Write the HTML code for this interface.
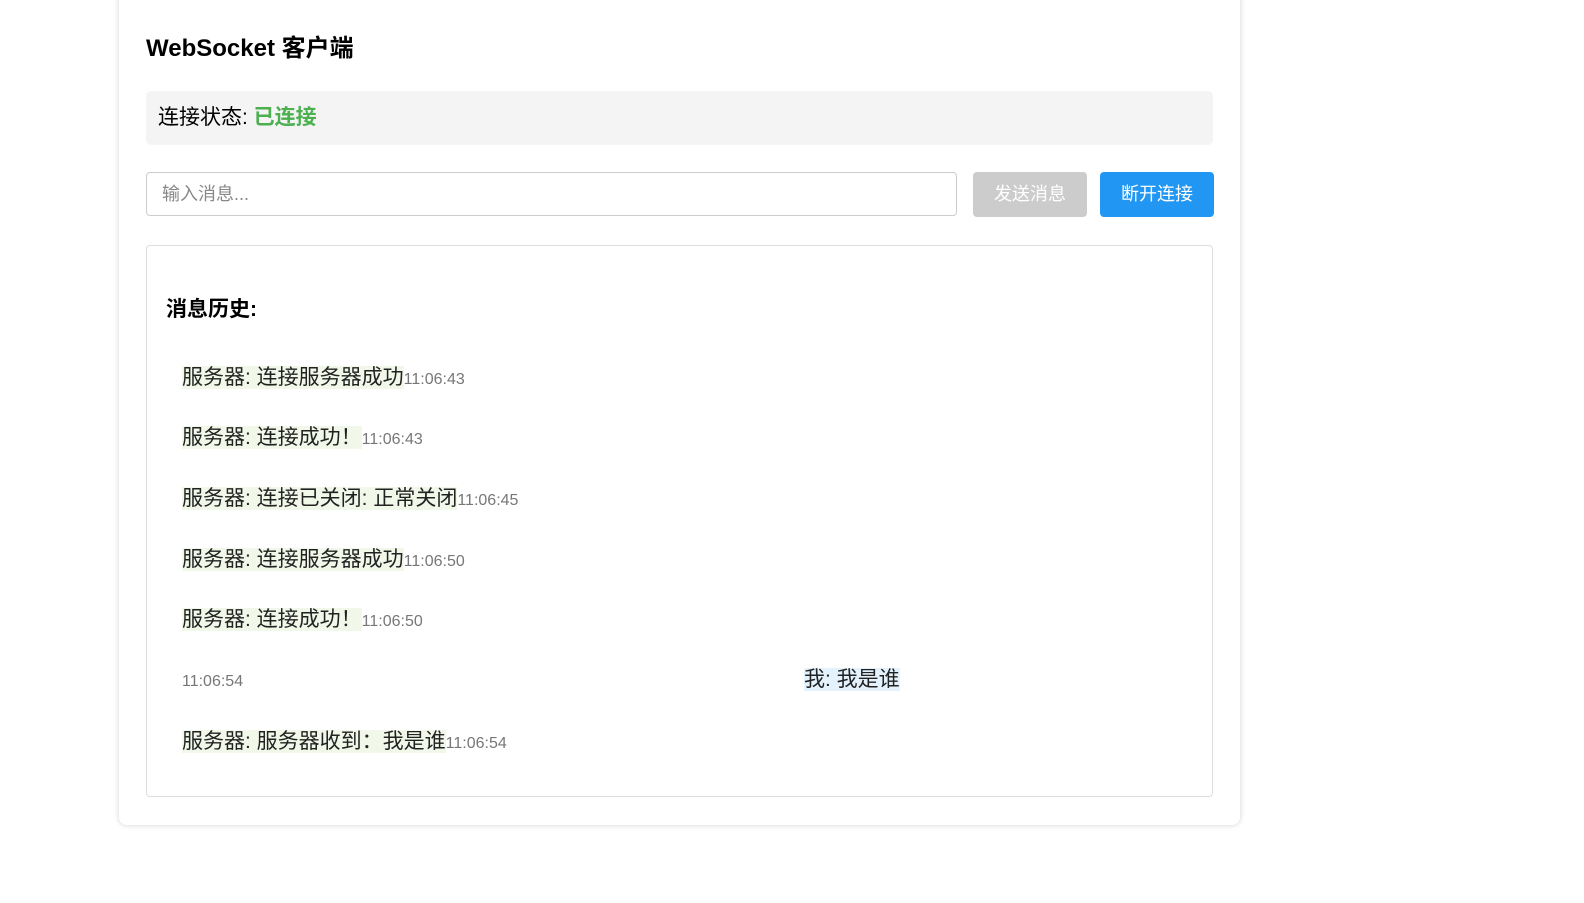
<!DOCTYPE html>
<html><head><meta charset="utf-8"><style>
body{margin:0;width:1584px;height:903px;background:#fff;font-family:"Liberation Sans","Noto Sans CJK SC",sans-serif;position:relative;overflow:hidden}
.card{position:absolute;left:119px;top:-10px;width:1121px;height:835px;border-radius:8px;box-shadow:0 0 6px rgba(0,0,0,.18);background:#fff}
.a{position:absolute;white-space:nowrap}
h1{position:absolute;left:146px;top:33px;margin:0;font-size:24px;font-weight:bold;line-height:32px}
.status{position:absolute;left:146px;top:91px;width:1067px;height:54px;background:#f4f4f4;border-radius:5px}
.input{position:absolute;left:146px;top:172px;width:811px;height:44px;border:1px solid #ccc;border-radius:4px;box-sizing:border-box}
.btn{position:absolute;top:172px;width:114px;height:45px;border-radius:4px;color:#fff;font-size:18px;text-align:center;line-height:45px}
.box{position:absolute;left:146px;top:245px;width:1067px;height:552px;border:1px solid #ddd;border-radius:4px;box-sizing:border-box}
.m{font-size:21px;background:#f1f8e9;color:#222;line-height:30px}
.t{font-size:16px;color:#777}
.row{position:absolute;left:182px;white-space:nowrap;line-height:30px}
</style></head><body>
<div class="card"></div>
<h1>WebSocket 客户端</h1>
<div class="status"></div>
<div class="a" style="left:158px;top:103px;font-size:21px;line-height:30px">连接状态: <b style="color:#4caf50">已连接</b></div>
<div class="input"></div>
<div class="a" style="left:162px;top:180px;font-size:18px;line-height:28px;color:#888">输入消息...</div>
<div class="btn" style="left:973px;background:#ccc">发送消息</div>
<div class="btn" style="left:1100px;background:#2196f3">断开连接</div>
<div class="box"></div>
<div class="a" style="left:166px;top:295px;font-size:21px;font-weight:bold;line-height:30px">消息历史:</div>
<div class="row" style="top:363px"><span class="m">服务器: 连接服务器成功</span><span class="t">11:06:43</span></div>
<div class="row" style="top:423px"><span class="m">服务器: 连接成功！</span><span class="t">11:06:43</span></div>
<div class="row" style="top:484px"><span class="m">服务器: 连接已关闭: 正常关闭</span><span class="t">11:06:45</span></div>
<div class="row" style="top:545px"><span class="m">服务器: 连接服务器成功</span><span class="t">11:06:50</span></div>
<div class="row" style="top:605px"><span class="m">服务器: 连接成功！</span><span class="t">11:06:50</span></div>
<div class="row" style="top:667px"><span class="t">11:06:54</span></div>
<div class="row" style="left:804px;top:665px"><span class="m" style="background:#e3f2fd">我: 我是谁</span></div>
<div class="row" style="top:727px"><span class="m">服务器: 服务器收到：我是谁</span><span class="t">11:06:54</span></div>
</body></html>
